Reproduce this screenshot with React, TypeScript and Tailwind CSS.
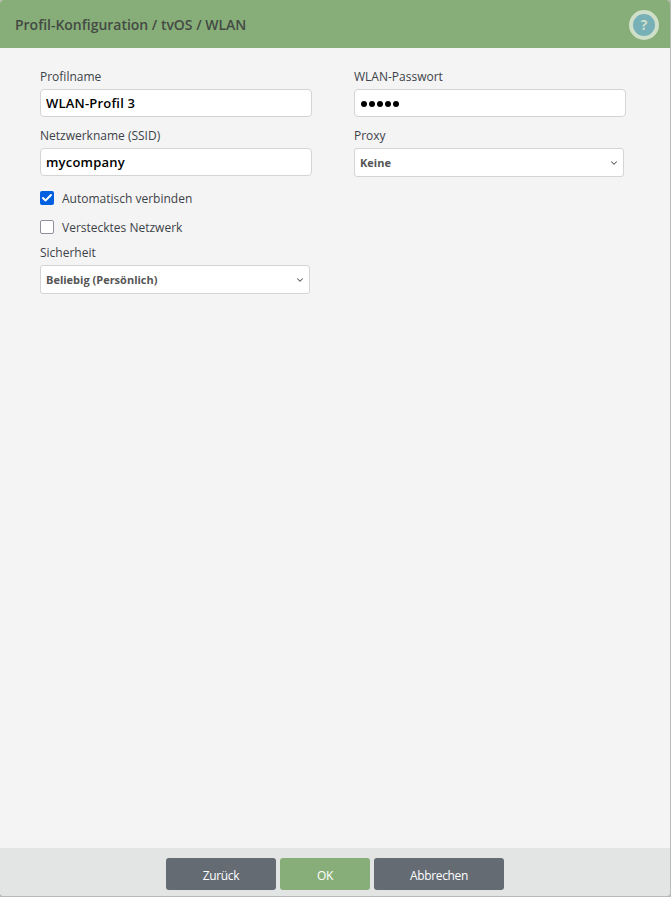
import { Check, ChevronDown } from 'lucide-react'

function TextField({ label, value }: { label: string; value: string }) {
  return (
    <label className="block h-[59px] w-[272px]">
      <span className="block h-[21px] text-[12px] leading-[17px]">{label}</span>
      <input
        type="text"
        defaultValue={value}
        className="block h-7 w-[272px] rounded-[4px] border border-[#d4d4d4] bg-white px-[5px] text-[13px] font-semibold tracking-[0.2px] text-black outline-none"
      />
    </label>
  )
}

function PasswordField({ label, length }: { label: string; length: number }) {
  return (
    <div className="h-[59px] w-[272px]">
      <span className="block h-[21px] text-[12px] leading-[17px]">{label}</span>
      <div className="flex h-7 items-center gap-[2px] rounded-[4px] border border-[#d4d4d4] bg-white px-[6px] pt-[2px]">
        {Array.from({ length }, (_, i) => (
          <span key={i} className="h-[6px] w-[6px] rounded-full bg-black" />
        ))}
      </div>
    </div>
  )
}

function SelectField({ label, value }: { label: string; value: string }) {
  return (
    <div className="w-[270px]">
      <span className="block h-[21px] text-[12px] leading-[17px]">{label}</span>
      <button className="flex h-[29px] w-full items-center justify-between rounded-[3px] border border-[#d4d4d4] bg-white pr-[4px] pl-[5px] text-[11px] font-bold text-[#555555]">
        <span className="pt-px">{value}</span>
        <ChevronDown className="h-2.5 w-2.5" strokeWidth={2.5} />
      </button>
    </div>
  )
}

function CheckField({ label, checked = false }: { label: string; checked?: boolean }) {
  return (
    <div className="flex h-[29px] items-center gap-2 text-[12px]">
      {checked ? (
        <span className="flex h-3.5 w-3.5 items-center justify-center rounded-[2px] bg-[#0060df]">
          <Check className="h-3 w-3 text-white" strokeWidth={4} />
        </span>
      ) : (
        <span className="h-3.5 w-3.5 rounded-[2px] border border-[#8f8f9d] bg-white" />
      )}
      <span className="pt-[2px]">{label}</span>
    </div>
  )
}

export default function App() {
  return (
    <div className="h-[897px] w-[671px] overflow-hidden bg-[#b9b9b9] pr-px pb-px font-['Open_Sans',sans-serif] text-[#3c4249]">
      <div className="flex h-full flex-col overflow-hidden rounded-[4px] bg-[#f4f4f4]">
        <header className="flex h-12 shrink-0 items-center justify-between bg-[#87ae78] pr-[11px] pl-[15px]">
          <h1 className="text-[14px] font-semibold tracking-[-0.02px] text-[#444a44]">Profil-Konfiguration / tvOS / WLAN</h1>
          <button className="mt-[2px] flex h-[30px] w-[30px] items-center justify-center rounded-full border-[4px] border-[#cfdfc9] bg-[#77b0b7] pb-px text-[14px] font-bold text-[#cfdfc9]">
            ?
          </button>
        </header>

        <main className="flex flex-1 gap-[42px] pt-5 pl-10">
          <div className="w-[272px]">
            <TextField label="Profilname" value="WLAN-Profil 3" />
            <TextField label="Netzwerkname (SSID)" value="mycompany" />
            <div className="-mt-[3px] mb-[3px]">
              <CheckField label="Automatisch verbinden" checked />
              <CheckField label="Verstecktes Netzwerk" />
            </div>
            <SelectField label="Sicherheit" value="Beliebig (Persönlich)" />
          </div>
          <div className="w-[272px]">
            <PasswordField label="WLAN-Passwort" length={5} />
            <SelectField label="Proxy" value="Keine" />
          </div>
        </main>

        <footer className="flex h-12 shrink-0 justify-center gap-1 bg-[#e3e5e4] pt-[10px] text-[12px] font-medium tracking-[-0.35px] text-white">
          <button className="h-8 w-[110px] rounded-[3px] bg-[#646b73] pt-[3px]">Zurück</button>
          <button className="h-8 w-[90px] rounded-[3px] bg-[#87ae78] pt-[3px]">OK</button>
          <button className="h-8 w-[130px] rounded-[3px] bg-[#646b73] pt-[3px]">Abbrechen</button>
        </footer>
      </div>
    </div>
  )
}
